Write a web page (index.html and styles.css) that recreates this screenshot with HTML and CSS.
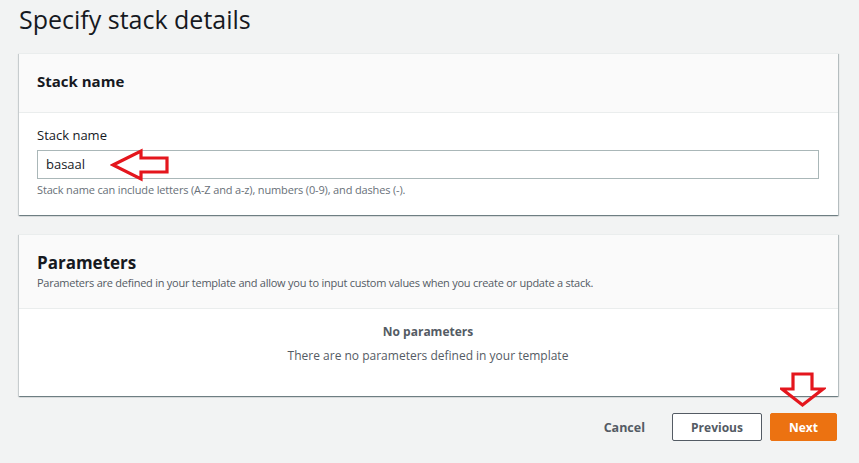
FILE: index.html
```html
<!DOCTYPE html>
<html>
<head>
<meta charset="utf-8">
<link rel="stylesheet" href="styles.css">
</head>
<body>
<div class="page">
  <h1 class="title">Specify stack details</h1>

  <section class="card">
    <div class="card-head">
      <h2 class="card-title">Stack name</h2>
    </div>
    <div class="card-body">
      <label class="label">Stack name</label>
      <div class="input-wrap">
        <div class="input">basaal</div>
        <svg class="arrow-left" width="60" height="34" viewBox="0 0 60 34">
          <path d="M3 17 L31 3 L31 10 L57 10 L57 24 L31 24 L31 31 Z" fill="none" stroke="#e4161d" stroke-width="3.2" stroke-linejoin="miter"/>
        </svg>
      </div>
      <div class="hint">Stack name can include letters (A-Z and a-z), numbers (0-9), and dashes (-).</div>
    </div>
  </section>

  <section class="card">
    <div class="card-head params-head">
      <h2 class="card-title big">Parameters</h2>
      <div class="desc">Parameters are defined in your template and allow you to input custom values when you create or update a stack.</div>
    </div>
    <div class="card-body empty">
      <div class="empty-title">No parameters</div>
      <div class="empty-text">There are no parameters defined in your template</div>
    </div>
  </section>

  <div class="actions">
    <button class="btn-link">Cancel</button>
    <button class="btn">Previous</button>
    <div class="next-wrap">
      <button class="btn primary">Next</button>
      <svg class="arrow-down" width="46" height="36" viewBox="0 0 46 36">
        <path d="M13 2 L32 2 L32 17 L43 17 L22.5 33 L2 17 L13 17 Z" fill="none" stroke="#e4161d" stroke-width="3.2" stroke-linejoin="miter"/>
      </svg>
    </div>
  </div>
</div>
</body>
</html>
```

FILE: styles.css
```css
* { box-sizing: border-box; }
html, body { margin: 0; padding: 0; }
body {
  background: #f2f3f3;
  font-family: "Open Sans", "Noto Sans", sans-serif;
  color: #16191f;
  width: 859px;
  height: 463px;
  overflow: hidden;
}
.page {
  padding: 0 21px 0 19px;
}
.title {
  margin: 0;
  font-size: 25px;
  font-weight: 400;
  line-height: 38px;
  height: 53px;
  padding-top: 0;
}
.card {
  background: #fff;
  box-shadow: 0 1px 1px 0 rgba(0,28,36,.35), 1px 1px 1px 0 rgba(0,28,36,.2), -1px 1px 1px 0 rgba(0,28,36,.12);
  border-top: 1px solid #eaeded;
  margin-bottom: 19px;
}
.card-head {
  background: #fafafa;
  border-bottom: 1px solid #eaeded;
  height: 59px;
  padding: 16px 18px 0;
}
.card-title {
  margin: 0;
  font-size: 15px;
  font-weight: 700;
  line-height: 22px;
}
.card-title.big { font-size: 17px; line-height: 24px; }
.params-head { height: 74px; padding-top: 16px; }
.desc {
  font-size: 11px;
  color: #545b64;
  line-height: 16px;
  letter-spacing: -0.25px;
}
.card-body {
  padding: 12px 19px 18px 18px;
  height: 102px;
}
.label {
  display: block;
  font-size: 13px;
  line-height: 20px;
  margin-bottom: 5px;
}
.input-wrap { position: relative; }
.input {
  height: 29px;
  border: 1px solid #aab7b8;
  font-size: 13px;
  line-height: 27px;
  padding-left: 8px;
  color: #16191f;
}
.arrow-left {
  position: absolute;
  left: 73px;
  top: -2px;
}
.hint {
  font-size: 11px;
  color: #687078;
  line-height: 16px;
  margin-top: 3px;
  letter-spacing: -0.15px;
}
.card-body.empty {
  height: 87px;
  text-align: center;
  padding-top: 13px;
}
.empty-title {
  font-size: 12px;
  font-weight: 700;
  color: #545b64;
  line-height: 20px;
}
.empty-text {
  font-size: 12px;
  color: #545b64;
  line-height: 20px;
  margin-top: 4px;
}
.actions {
  display: flex;
  justify-content: flex-end;
  align-items: center;
  gap: 8px;
  margin-top: -2px;
  margin-right: 1px;
}
.btn-link, .btn {
  font-family: inherit;
  font-size: 12px;
  font-weight: 700;
  height: 28px;
  border-radius: 2px;
  cursor: pointer;
  padding: 0;
}
.btn-link {
  background: none;
  border: none;
  color: #545b64;
  padding: 0 19px 0 18px;
  font-size: 12.5px;
}
.btn {
  background: #fff;
  border: 1px solid #545b64;
  color: #545b64;
  width: 90px;
}
.next-wrap { position: relative; }
.btn.primary {
  background: #ec7211;
  border-color: #ec7211;
  color: #fff;
  width: 67px;
  display: block;
}
.arrow-down {
  position: absolute;
  left: 10px;
  top: -41px;
}
```
